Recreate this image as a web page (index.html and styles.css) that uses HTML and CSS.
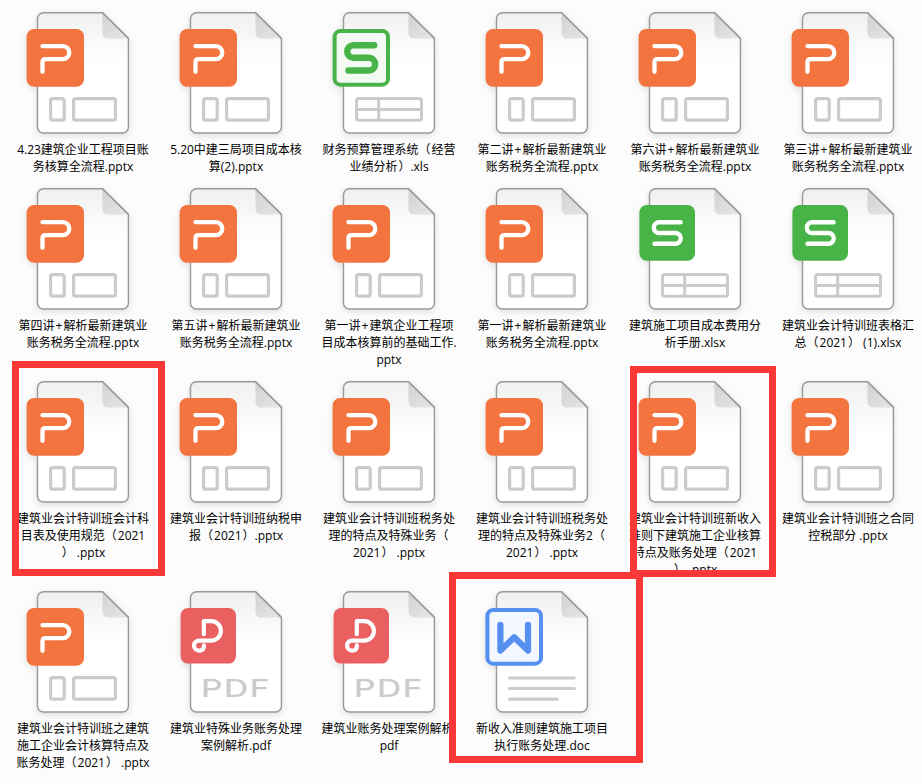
FILE: index.html
```
<!DOCTYPE html>
<html lang="zh-CN">
<head>
    <meta charset="UTF-8">
    <meta name="viewport" content="width=device-width, initial-scale=1.0">
    <title>文件</title>
    <link rel="stylesheet" href="styles.css">
</head>
<body>
    <!-- icon definitions -->
    <svg class="defs" width="0" height="0">
        <defs>
            <linearGradient id="paper" x1="0" y1="0" x2="0" y2="1">
                <stop offset="0" stop-color="#f0f0f0"/>
                <stop offset="0.42" stop-color="#ffffff"/>
            </linearGradient>
            <linearGradient id="fold" x1="0" y1="0" x2="1" y2="1">
                <stop offset="0" stop-color="#d2d2d2"/>
                <stop offset="1" stop-color="#e6e6e6"/>
            </linearGradient>
        </defs>
        <symbol id="page" viewBox="0 0 153 141">
            <path d="M36.5 12.7H95.5L121.4 38.4V127a6 6 0 0 1-6 6H36.5a6 6 0 0 1-6-6V18.7a6 6 0 0 1 6-6z" fill="url(#paper)" stroke="#999" stroke-width="1.4"/>
            <path d="M95.5 13.2L121 38.6H101a5.5 5.5 0 0 1-5.5-5.5z" fill="url(#fold)"/>
            <path d="M95.5 12.7L121.4 38.4" stroke="#999" stroke-width="1.4"/>
        </symbol>
        <symbol id="ppt" viewBox="0 0 153 141">
            <use href="#page"/>
            <g fill="none" stroke="#cbcbcb" stroke-width="3.2">
                <rect x="43.6" y="98.6" width="13.6" height="21.6" rx="2"/>
                <rect x="66.6" y="98.6" width="41.8" height="21.6" rx="2"/>
            </g>
            <rect x="19.6" y="29" width="57.4" height="57.7" rx="7.5" fill="#f3743f"/>
            <path d="M35.5 46.2H55.8a6.5 6.5 0 0 1 0 13H38.5q-3 0-3 3V71.8" fill="none" stroke="#fff" stroke-width="4.3" stroke-linecap="round"/>
        </symbol>
        <symbol id="grid" viewBox="0 0 153 141">
            <path d="M45.6 98.6H106.5a2 2 0 0 1 2 2V118.2a2 2 0 0 1-2 2H45.6a2 2 0 0 1-2-2V100.6a2 2 0 0 1 2-2zM43.6 109.4H108.5M65.7 98.6V120.2" fill="none" stroke="#cbcbcb" stroke-width="3"/>
        </symbol>
        <symbol id="xls" viewBox="0 0 153 141">
            <use href="#page"/>
            <use href="#grid"/>
            <rect x="21.6" y="31" width="53.4" height="53.7" rx="6" fill="#f2faf3" stroke="#48b346" stroke-width="4"/>
            <path d="M61.2 45.2H40.5a6.3 6.3 0 0 0 0 12.6H55.8a6.35 6.35 0 0 1 0 12.7H35.5" fill="none" stroke="#48b346" stroke-width="6.4" stroke-linecap="round"/>
        </symbol>
        <symbol id="xlsx" viewBox="0 0 153 141">
            <use href="#page"/>
            <use href="#grid"/>
            <rect x="20.4" y="29" width="55.6" height="55.7" rx="7.5" fill="#48b346"/>
            <path d="M61.6 46.3H40.2a5.35 5.35 0 0 0 0 10.7H56.4a5.35 5.35 0 0 1 0 10.7H35.5" fill="none" stroke="#fff" stroke-width="4.4" stroke-linecap="round"/>
        </symbol>
        <symbol id="pdf" viewBox="0 0 153 141">
            <use href="#page"/>
            <rect x="20.6" y="29" width="55.4" height="55.6" rx="7.5" fill="#ea5f5f"/>
            <path d="M43.8 55.2V42.2H51.2a9.7 9.7 0 0 1 0 19.4H39a5 5 0 0 0 0 10q4.9 0 4.9-5.2" fill="none" stroke="#fff" stroke-width="4.2" stroke-linecap="round" stroke-linejoin="round"/>
        </symbol>
        <symbol id="doc" viewBox="0 0 153 141">
            <use href="#page"/>
            <path d="M43.6 99H108.3M43.6 109.5H108.3M43.6 120.2H91.3" stroke="#cbcbcb" stroke-width="3.2" stroke-linecap="round"/>
            <rect x="21.4" y="31" width="53.6" height="53.7" rx="6" fill="#f3f7ff" stroke="#5590f0" stroke-width="4"/>
            <path d="M34.4 45.8V71.6L48.2 58.2L62 71.6V45.8" fill="none" stroke="#5590f0" stroke-width="6.2" stroke-linecap="round" stroke-linejoin="round"/>
        </symbol>
    </svg>

    <div class="files">
        <div class="file"><svg class="icon"><use href="#ppt"/></svg><div class="name">4.23建筑企业工程项目账<br>务核算全流程.pptx</div></div>
        <div class="file"><svg class="icon"><use href="#ppt"/></svg><div class="name">5.20中建三局项目成本核<br>算(2).pptx</div></div>
        <div class="file"><svg class="icon"><use href="#xls"/></svg><div class="name">财务预算管理系统<span class="open">（</span>经营<br>业绩分析<span class="close">）</span>.xls</div></div>
        <div class="file"><svg class="icon"><use href="#ppt"/></svg><div class="name">第二讲<span class="plus">+</span>解析最新建筑业<br>账务税务全流程.pptx</div></div>
        <div class="file"><svg class="icon"><use href="#ppt"/></svg><div class="name">第六讲<span class="plus">+</span>解析最新建筑业<br>账务税务全流程.pptx</div></div>
        <div class="file"><svg class="icon"><use href="#ppt"/></svg><div class="name">第三讲<span class="plus">+</span>解析最新建筑业<br>账务税务全流程.pptx</div></div>

        <div class="file"><svg class="icon"><use href="#ppt"/></svg><div class="name">第四讲<span class="plus">+</span>解析最新建筑业<br>账务税务全流程.pptx</div></div>
        <div class="file"><svg class="icon"><use href="#ppt"/></svg><div class="name">第五讲<span class="plus">+</span>解析最新建筑业<br>账务税务全流程.pptx</div></div>
        <div class="file"><svg class="icon"><use href="#ppt"/></svg><div class="name">第一讲<span class="plus">+</span>建筑企业工程项<br>目成本核算前的基础工作.<br>pptx</div></div>
        <div class="file"><svg class="icon"><use href="#ppt"/></svg><div class="name">第一讲<span class="plus">+</span>解析最新建筑业<br>账务税务全流程.pptx</div></div>
        <div class="file"><svg class="icon"><use href="#xlsx"/></svg><div class="name">建筑施工项目成本费用分<br>析手册.xlsx</div></div>
        <div class="file"><svg class="icon"><use href="#xlsx"/></svg><div class="name">建筑业会计特训班表格汇<br>总<span class="open">（</span>2021<span class="close">）</span> (1).xlsx</div></div>

        <div class="file"><svg class="icon"><use href="#ppt"/></svg><div class="name">建筑业会计特训班会计科<br>目表及使用规范<span class="open">（</span>2021<br><span class="close">）</span> .pptx</div></div>
        <div class="file"><svg class="icon"><use href="#ppt"/></svg><div class="name">建筑业会计特训班纳税申<br>报<span class="open">（</span>2021<span class="close">）</span>.pptx</div></div>
        <div class="file"><svg class="icon"><use href="#ppt"/></svg><div class="name">建筑业会计特训班税务处<br>理的特点及特殊业务<span class="open">（</span><br>2021<span class="close">）</span> .pptx</div></div>
        <div class="file"><svg class="icon"><use href="#ppt"/></svg><div class="name">建筑业会计特训班税务处<br>理的特点及特殊业务2<span class="open">（</span><br>2021<span class="close">）</span> .pptx</div></div>
        <div class="file"><svg class="icon"><use href="#ppt"/></svg><div class="name">建筑业会计特训班新收入<br>准则下建筑施工企业核算<br>特点及账务处理<span class="open">（</span>2021<br><span class="close">）</span> .pptx</div></div>
        <div class="file"><svg class="icon"><use href="#ppt"/></svg><div class="name">建筑业会计特训班之合同<br>控税部分 .pptx</div></div>

        <div class="file"><svg class="icon"><use href="#ppt"/></svg><div class="name">建筑业会计特训班之建筑<br>施工企业会计核算特点及<br>账务处理<span class="open">（</span>2021<span class="close">）</span> .pptx</div></div>
        <div class="file"><svg class="icon"><use href="#pdf"/><text class="pdf-text" x="41" y="117.5" textLength="70" lengthAdjust="spacingAndGlyphs">PDF</text></svg><div class="name">建筑业特殊业务账务处理<br>案例解析.pdf</div></div>
        <div class="file"><svg class="icon"><use href="#pdf"/><text class="pdf-text" x="41" y="117.5" textLength="70" lengthAdjust="spacingAndGlyphs">PDF</text></svg><div class="name">建筑业账务处理案例解析.<br>pdf</div></div>
        <div class="file"><svg class="icon"><use href="#doc"/></svg><div class="name">新收入准则建筑施工项目<br>执行账务处理.doc</div></div>
    </div>

    <!-- red marks over the files -->
    <div class="mark mark-subjects"></div>
    <div class="mark mark-income"></div>
    <div class="mark mark-doc"></div>
</body>
</html>
```
FILE: styles.css
```
* {
    box-sizing: border-box;
}
body {
    margin: 0;
    position: relative;
    width: 922px;
    height: 784px;
    overflow: hidden;
    background-color: #fcfcfc;
    color: #000;
    font-family: "Open Sans", "Noto Sans CJK SC", sans-serif;
    font-size: 12px;
}
.defs {
    display: block;
}
.files {
    display: grid;
    grid-template-columns: repeat(6, 153px);
    grid-template-rows: 176px 193px 210px 205px;
    padding-left: 7px;
}
.icon {
    display: block;
    width: 153px;
    height: 141px;
    filter: drop-shadow(0 2px 3px rgba(0, 0, 0, 0.12));
}
.pdf-text {
    font-family: Inter, sans-serif;
    font-size: 24px;
    font-weight: 500;
    letter-spacing: 1px;
    fill: #cbcbcb;
}
.name {
    padding-right: 1px;
    line-height: 17px;
    text-align: center;
    white-space: nowrap;
}
.open {
    margin-right: 1px;
}
.close {
    margin-left: 1px;
}
.plus {
    margin: 0 1px;
}
.mark {
    position: absolute;
    border: 7px solid #fb3838;
}
.mark-subjects {
    left: 12px;
    top: 361px;
    width: 153px;
    height: 215px;
}
.mark-income {
    left: 630px;
    top: 366px;
    width: 146px;
    height: 211px;
}
.mark-doc {
    left: 449px;
    top: 572px;
    width: 194px;
    height: 191px;
}
```
